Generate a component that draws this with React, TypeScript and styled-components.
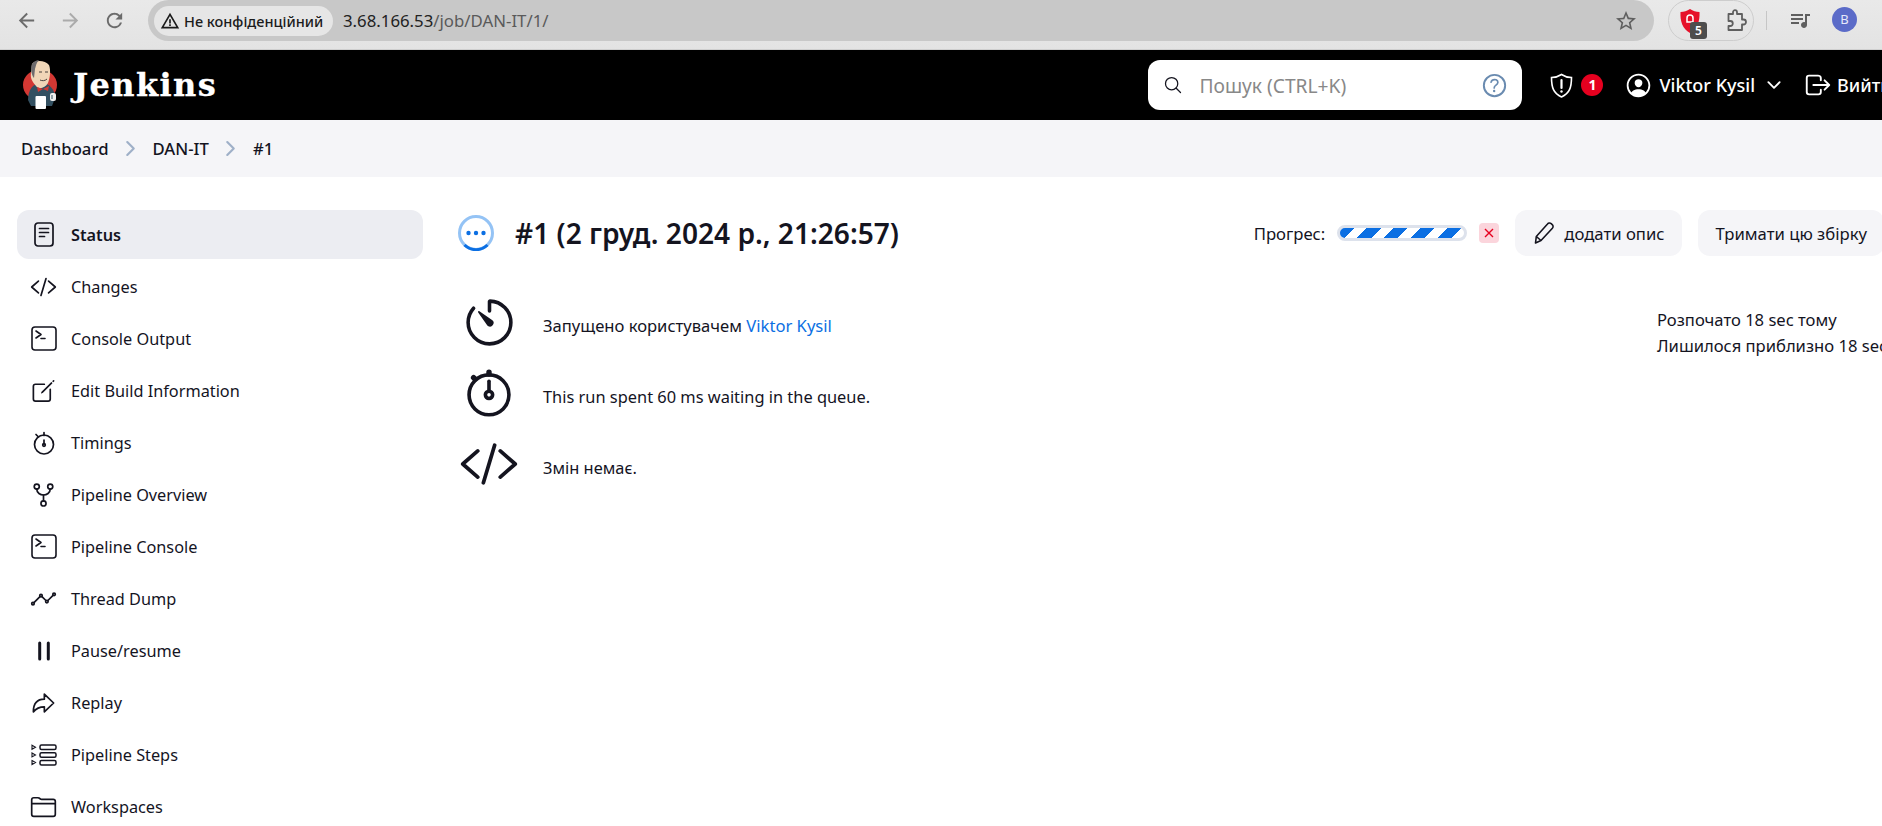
import React from "react";
import styled, { createGlobalStyle } from "styled-components";
import {
  IoAnalyticsOutline,
  IoArrowRedoOutline,
  IoChevronDownOutline,
  IoChevronForwardOutline,
  IoCodeSlashOutline,
  IoCreateOutline,
  IoFolderOutline,
  IoGitNetworkOutline,
  IoHelpCircleOutline,
  IoLogOutOutline,
  IoPersonCircleOutline,
  IoSearchOutline,
  IoStopwatchOutline,
  IoTimerOutline,
} from "react-icons/io5";
import { MdArrowBack, MdArrowForward, MdQueueMusic, MdRefresh, MdStarBorder, MdWarningAmber } from "react-icons/md";

const GlobalStyle = createGlobalStyle`
  html, body {
    margin: 0;
    height: 100%;
    overflow: hidden;
    background: #fff;
  }
  * { box-sizing: border-box; }
  body {
    font-family: "Noto Sans", "Open Sans", sans-serif;
    color: #14141f;
  }
`;

const Root = styled.div`
  width: 1900px;
  height: 826px;
  overflow: hidden;
`;

/* browser chrome */
const ChromeBar = styled.div`
  height: 50px;
  width: 1882px;
  display: flex;
  align-items: flex-start;
  background: linear-gradient(#e9e9e9, #e3e3e3);
  border-bottom: 1px solid #cfcfcf;
`;

const NavButtons = styled.div`
  width: 148px;
  height: 41px;
  flex: none;
  padding-left: 15px;
  display: flex;
  align-items: center;
  gap: 21px;
`;

const NavIcon = styled.span<{ $dim?: boolean }>`
  display: flex;
  color: ${(p) => (p.$dim ? "#ababab" : "#6b6b6b")};
  font-size: 23px;
`;

const Omnibox = styled.div`
  width: 1506px;
  height: 41px;
  flex: none;
  padding: 0 16px 0 6px;
  border-radius: 21px;
  background: #c8c8c8;
  display: flex;
  align-items: center;
`;

const SecurityChip = styled.div`
  width: 179px;
  height: 30px;
  flex: none;
  border-radius: 15px;
  background: #e6e6e6;
  padding-left: 6px;
  display: flex;
  align-items: center;
  gap: 4px;
  font-size: 14.500px;
  font-weight: 500;
  color: #1c1c1c;
  white-space: nowrap;
  svg { font-size: 20px; }
`;

const Url = styled.div`
  margin-left: 10px;
  font-size: 16.800px;
  color: #5a5a5a;
  flex: 1;
  b { font-weight: 400; color: #222; }
`;

const StarIcon = styled.span`
  display: flex;
  font-size: 24px;
  color: #5f5f5f;
`;

const ExtensionPill = styled.div`
  margin-left: 14px;
  width: 86px;
  height: 41px;
  flex: none;
  border: 1px solid #cdcdcd;
  border-radius: 21px;
  display: flex;
  align-items: center;
  padding-left: 11px;
  gap: 27px;
`;

const ShieldWrap = styled.div`
  position: relative;
  width: 20px;
  height: 24px;
  display: flex;
`;

const CountBadge = styled.span`
  position: absolute;
  left: 10px;
  top: 13px;
  width: 17px;
  height: 17px;
  border-radius: 3px;
  background: #4d4d4d;
  color: #fff;
  font-size: 12px;
  line-height: 17px;
  font-weight: 600;
  text-align: center;
`;

const ChromeDivider = styled.div`
  margin: 11px 0 0 12px;
  width: 1px;
  height: 19px;
  background: #c6c6c6;
`;

const MediaIcon = styled.span`
  margin: 8px 0 0 21px;
  display: flex;
  font-size: 24px;
  color: #5f5f5f;
`;

const Avatar = styled.div`
  margin: 7px 0 0 20px;
  width: 25px;
  height: 25px;
  border-radius: 50%;
  background: #5b6bc8;
  color: #e6e8fa;
  font-size: 13px;
  line-height: 25px;
  text-align: center;
`;

/* jenkins header */
const Header = styled.header`
  height: 70px;
  background: #000;
  color: #fff;
  display: flex;
  align-items: center;
  padding-left: 22px;
`;

const Brand = styled.div`
  display: flex;
  align-items: center;
  gap: 15px;
`;

const Wordmark = styled.span`
  font-family: "DejaVu Serif", "Liberation Serif", serif;
  font-weight: 700;
  font-size: 32px;
  letter-spacing: 1.400px;
  -webkit-text-stroke: 0.300px #fff;
  color: #fff;
`;

const HeaderRight = styled.div`
  margin-left: auto;
  display: flex;
  align-items: center;
`;

const SearchBox = styled.div`
  width: 374px;
  height: 50px;
  border-radius: 12px;
  background: #fff;
  color: #888;
  display: flex;
  align-items: center;
  padding: 0 12px 0 15px;
  font-size: 19.200px;
`;

const SearchIcon = styled.span`
  display: flex;
  font-size: 20px;
  color: #14141f;
  margin-right: 16px;
`;

const SearchHint = styled.span`
  flex: 1;
`;

const HelpIcon = styled.span`
  display: flex;
  font-size: 31px;
  color: #6a8bb0;
`;

const AlertIcon = styled.span`
  margin-left: 27px;
  display: flex;
`;

const AlertBadge = styled.span`
  margin-left: 7px;
  width: 22px;
  height: 22px;
  border-radius: 50%;
  background: #e6001f;
  color: #fff;
  font-size: 14px;
  font-weight: 700;
  line-height: 22px;
  text-align: center;
`;

const UserIcon = styled.span`
  margin-left: 21px;
  display: flex;
  font-size: 29px;
`;

const UserName = styled.span`
  margin-left: 6px;
  font-size: 18px;
  font-weight: 500;
  white-space: nowrap;
`;

const Chevron = styled.span`
  margin-left: 9px;
  display: flex;
  font-size: 20px;
`;

const LogoutIcon = styled.span`
  margin-left: 19px;
  display: flex;
  font-size: 30px;
`;

const LogoutText = styled.span`
  margin-left: 4px;
  width: 63px;
  font-size: 18px;
  font-weight: 500;
`;

/* breadcrumbs */
const Crumbs = styled.nav`
  height: 57px;
  background: #f5f5f8;
  padding-left: 21px;
  display: flex;
  align-items: center;
  font-size: 16.700px;
  font-weight: 500;
`;

const CrumbSep = styled.span`
  margin: 0 10.500px;
  display: flex;
  font-size: 23px;
  color: #9fb0c8;
`;

/* page */
const Page = styled.div`
  display: flex;
  padding: 33px 16px 0 17px;
`;

const Side = styled.aside`
  width: 406px;
  flex: none;
  display: flex;
  flex-direction: column;
  gap: 3px;
`;

const SideItem = styled.a<{ $active?: boolean }>`
  height: 49px;
  flex: none;
  display: flex;
  align-items: center;
  gap: 14px;
  padding-left: 13px;
  border-radius: 12px;
  font-size: 16.300px;
  font-weight: ${(p) => (p.$active ? 600 : 400)};
  background: ${(p) => (p.$active ? "#ecedf2" : "transparent")};
  color: #14141f;
`;

const SideIcon = styled.span`
  width: 27px;
  height: 27px;
  flex: none;
  display: flex;
  align-items: center;
  justify-content: center;
  font-size: 28px;
`;

const Content = styled.main`
  flex: 1;
  margin-left: 35px;
  min-width: 0;
`;

const TitleRow = styled.div`
  height: 46px;
  display: flex;
  align-items: center;
`;

const Title = styled.h1`
  margin: 0 0 0 21px;
  font-size: 28.100px;
  font-weight: 600;
  white-space: nowrap;
`;

const Actions = styled.div`
  margin-left: auto;
  display: flex;
  align-items: center;
  font-size: 16.700px;
`;

const ProgressLabel = styled.span`
  margin-right: 12px;
`;

const ProgressBar = styled.div`
  width: 130px;
  height: 16px;
  border: 3px solid #dde2ec;
  border-radius: 8px;
  background: repeating-linear-gradient(135deg, #0b6fe3 0 10px, #fff 10px 19px);
`;

const CancelButton = styled.span`
  margin-left: 12px;
  width: 20px;
  height: 20px;
  border-radius: 4px;
  background: #fbd5dc;
  color: #e6001f;
  display: flex;
  align-items: center;
  justify-content: center;
`;

const ActionButton = styled.button`
  height: 46px;
  border: none;
  border-radius: 12px;
  background: #f5f5f8;
  color: #14141f;
  font: inherit;
  padding: 0 17px 0 18px;
  display: flex;
  align-items: center;
  gap: 9px;
  white-space: nowrap;
  margin-left: 16px;
`;

const Body = styled.div`
  margin-top: 42px;
  display: flex;
  justify-content: space-between;
`;

const Facts = styled.div`
  display: flex;
  flex-direction: column;
  gap: 23px;
`;

const Fact = styled.div`
  height: 48px;
  display: flex;
  align-items: center;
  gap: 30px;
  margin-left: 7px;
`;

const FactIcon = styled.span<{ $size: number }>`
  width: 48px;
  height: 48px;
  flex: none;
  display: flex;
  align-items: center;
  justify-content: center;
  font-size: ${(p) => p.$size}px;
  svg { flex: none; }
`;

const FactText = styled.span<{ $size: number }>`
  margin-top: 7px;
  font-size: ${(p) => p.$size}px;
  a { color: #0b6fe3; text-decoration: none; }
`;

const Timing = styled.div`
  width: 227px;
  margin-top: 9px;
  font-size: 16.600px;
  line-height: 26px;
  white-space: nowrap;
`;

const JenkinsLogo = () => (
  <svg width="36" height="50" viewBox="0 0 36 50">
    <ellipse cx="18" cy="25" rx="17" ry="15.500" fill="#d33833" />
    <path d="M6 40c0-10 5-17 13-17s14 6 14 15l-3 8H9z" fill="#335061" />
    <path d="M10 4c3-4 13-4 17 1 2 5 1 13-1 18-3 5-9 7-12 3-3-4-6-7-5-13z" fill="#f0d6b7" />
    <path d="M10 4c2-3 5-4 7-4-3 3-3 6-4 9l-1 9c-2-2-4-9-2-14z" fill="#6d6b6d" />
    <path d="M17 12h3M23 12h3M18 20c2 1 5 1 7-1" stroke="#49423c" strokeWidth="1" fill="none" />
    <path d="M15 27l6 2 6-3-1 5-5-2-5 3z" fill="#d33833" />
    <rect x="13.500" y="36" width="10.500" height="13" rx="1" fill="#fff" />
    <rect x="28" y="33" width="6" height="8" rx="2" fill="#eee" />
    <path d="M30 35v4" stroke="#335061" strokeWidth="1" />
  </svg>
);

const ShieldAlert = () => (
  <svg width="25" height="25" viewBox="0 0 25 25" fill="none" stroke="#fff" strokeWidth="1.600">
    <path d="M12.500 1.500c3 2 6 3 10 3 0 10-2 16-10 19.500C4.500 20.500 2.500 14.500 2.500 4.500c4 0 7-1 10-3z" />
    <path d="M12.500 7v8" strokeWidth="2.200" strokeLinecap="round" />
    <circle cx="12.500" cy="18.500" r="1.200" fill="#fff" stroke="none" />
  </svg>
);

const BraveShield = () => (
  <svg width="20" height="24" viewBox="0 0 20 24">
    <path d="M10 0c3 2 6 3 9.500 3 .5 9-2 17-9.500 21C2.500 20 0 12 .5 3 4 3 7 2 10 0z" fill="#e6112a" />
    <path d="M10 6a3 3 0 0 1 3 3v4h-6V9a3 3 0 0 1 3-3z" fill="none" stroke="#fff" strokeWidth="1.500" />
  </svg>
);

const PuzzleIcon = () => (
  <svg width="20" height="24" viewBox="0 0 20 24" fill="none" stroke="#5f5f5f" strokeWidth="1.800" strokeLinejoin="round">
    <path d="M1.500 5h4.500V3.200a2 2 0 0 1 4 0V5h5v5.500h1.500a2.500 2.500 0 0 1 0 5H15V21H1.500v-4h1.800a2.500 2.500 0 0 0 0-5H1.500z" />
  </svg>
);

const StatusIcon = () => (
  <svg width="36" height="36" viewBox="0 0 36 36" fill="none" style={{ flex: "none" }}>
    <circle cx="18" cy="18" r="16.500" stroke="#94c3f5" strokeWidth="3" />
    <path d="M6.500 30a16.500 16.500 0 0 0 23 0" stroke="#0b6fe3" strokeWidth="3" />
    <circle cx="10.500" cy="18" r="2.200" fill="#0b6fe3" />
    <circle cx="18" cy="18" r="2.200" fill="#0b6fe3" />
    <circle cx="25.500" cy="18" r="2.200" fill="#0b6fe3" />
  </svg>
);

const DocIcon = () => (
  <svg width="20" height="25" viewBox="0 0 20 25" fill="none" stroke="#14141f" strokeWidth="1.700" strokeLinecap="round">
    <rect x="1" y="1" width="18" height="23" rx="3" />
    <path d="M5.500 6.500h9M5.500 10.500h9M5.500 14.500h5" />
  </svg>
);

const ConsoleIcon = () => (
  <svg width="26" height="25" viewBox="0 0 26 25" fill="none" stroke="#14141f" strokeWidth="1.600" strokeLinecap="round" strokeLinejoin="round">
    <rect x="1" y="1" width="24" height="23" rx="3" />
    <path d="M5 5l5 3.500L5 12M10 12.500h4" />
  </svg>
);

const TimingsIcon = () => (
  <svg width="22" height="24" viewBox="0 0 22 24" fill="none" stroke="#14141f" strokeWidth="1.700" strokeLinecap="round">
    <circle cx="11" cy="13.500" r="9.500" />
    <path d="M11 1.500v3M3 3.500l2 2M11 9v4" />
    <circle cx="11" cy="14" r="1.300" />
  </svg>
);

const PauseIcon = () => (
  <svg width="12" height="20" viewBox="0 0 12 20" fill="none" stroke="#14141f" strokeWidth="3" strokeLinecap="round">
    <path d="M1.700 2v16M10.300 2v16" />
  </svg>
);

const StepsIcon = () => (
  <svg width="26" height="22" viewBox="0 0 26 22" fill="none" stroke="#14141f" strokeWidth="1.500">
    <rect x="9" y="1" width="16" height="4.500" rx="1.500" />
    <rect x="9" y="8.700" width="16" height="4.500" rx="1.500" />
    <rect x="9" y="16.400" width="16" height="4.500" rx="1.500" />
    <path d="M1 1.200l3.500 2L1 5.200zM1 8.900l3.500 2L1 12.900zM1 16.600l3.500 2L1 20.600z" strokeWidth="1.100" />
  </svg>
);

const PencilIcon = () => (
  <svg width="22" height="24" viewBox="0 0 22 24" fill="none" stroke="#14141f" strokeWidth="1.600" strokeLinejoin="round">
    <path d="M2.500 22l.8-6.500L14.500 3a2.600 2.600 0 0 1 3.700-.3l1 .9a2.600 2.600 0 0 1 .2 3.700L8 19.500z" />
    <path d="M3.300 15.500L8 19.500" />
  </svg>
);

type NavEntry = { label: string; icon: React.ReactNode; active?: boolean };

const navEntries: NavEntry[] = [
  { label: "Status", icon: <DocIcon />, active: true },
  { label: "Changes", icon: <IoCodeSlashOutline /> },
  { label: "Console Output", icon: <ConsoleIcon /> },
  { label: "Edit Build Information", icon: <IoCreateOutline /> },
  { label: "Timings", icon: <TimingsIcon /> },
  { label: "Pipeline Overview", icon: <IoGitNetworkOutline /> },
  { label: "Pipeline Console", icon: <ConsoleIcon /> },
  { label: "Thread Dump", icon: <IoAnalyticsOutline /> },
  { label: "Pause/resume", icon: <PauseIcon /> },
  { label: "Replay", icon: <IoArrowRedoOutline /> },
  { label: "Pipeline Steps", icon: <StepsIcon /> },
  { label: "Workspaces", icon: <IoFolderOutline /> },
];

const App = () => (
  <Root>
    <GlobalStyle />
    <ChromeBar>
      <NavButtons>
        <NavIcon><MdArrowBack /></NavIcon>
        <NavIcon $dim><MdArrowForward /></NavIcon>
        <NavIcon><MdRefresh /></NavIcon>
      </NavButtons>
      <Omnibox>
        <SecurityChip><MdWarningAmber />Не конфіденційний</SecurityChip>
        <Url><b>3.68.166.53</b>/job/DAN-IT/1/</Url>
        <StarIcon><MdStarBorder /></StarIcon>
      </Omnibox>
      <ExtensionPill>
        <ShieldWrap><BraveShield /><CountBadge>5</CountBadge></ShieldWrap>
        <PuzzleIcon />
      </ExtensionPill>
      <ChromeDivider />
      <MediaIcon><MdQueueMusic /></MediaIcon>
      <Avatar>B</Avatar>
    </ChromeBar>

    <Header>
      <Brand>
        <JenkinsLogo />
        <Wordmark>Jenkins</Wordmark>
      </Brand>
      <HeaderRight>
        <SearchBox>
          <SearchIcon><IoSearchOutline /></SearchIcon>
          <SearchHint>Пошук (CTRL+K)</SearchHint>
          <HelpIcon><IoHelpCircleOutline /></HelpIcon>
        </SearchBox>
        <AlertIcon><ShieldAlert /></AlertIcon>
        <AlertBadge>1</AlertBadge>
        <UserIcon><IoPersonCircleOutline /></UserIcon>
        <UserName>Viktor Kysil</UserName>
        <Chevron><IoChevronDownOutline /></Chevron>
        <LogoutIcon><IoLogOutOutline /></LogoutIcon>
        <LogoutText>Вийти</LogoutText>
      </HeaderRight>
    </Header>

    <Crumbs>
      Dashboard
      <CrumbSep><IoChevronForwardOutline /></CrumbSep>
      DAN-IT
      <CrumbSep><IoChevronForwardOutline /></CrumbSep>
      #1
    </Crumbs>

    <Page>
      <Side>
        {navEntries.map((entry) => (
          <SideItem key={entry.label} $active={entry.active}>
            <SideIcon>{entry.icon}</SideIcon>
            {entry.label}
          </SideItem>
        ))}
      </Side>
      <Content>
        <TitleRow>
          <StatusIcon />
          <Title>#1 (2 груд. 2024 р., 21:26:57)</Title>
          <Actions>
            <ProgressLabel>Прогрес:</ProgressLabel>
            <ProgressBar />
            <CancelButton>
              <svg width="10" height="10" viewBox="0 0 10 10" stroke="currentColor" strokeWidth="1.400">
                <path d="M1 1l8 8M9 1l-8 8" />
              </svg>
            </CancelButton>
            <ActionButton><PencilIcon />додати опис</ActionButton>
            <ActionButton>Тримати цю збірку</ActionButton>
          </Actions>
        </TitleRow>
        <Body>
          <Facts>
            <Fact>
              <FactIcon $size={57}><IoTimerOutline /></FactIcon>
              <FactText $size={16.6}>Запущено користувачем <a href="#user">Viktor Kysil</a></FactText>
            </Fact>
            <Fact>
              <FactIcon $size={58}><IoStopwatchOutline /></FactIcon>
              <FactText $size={16.4}>This run spent 60 ms waiting in the queue.</FactText>
            </Fact>
            <Fact>
              <FactIcon $size={60}><IoCodeSlashOutline /></FactIcon>
              <FactText $size={16.4}>Змін немає.</FactText>
            </Fact>
          </Facts>
          <Timing>
            Розпочато 18 sec тому
            <br />
            Лишилося приблизно 18 sec тому
          </Timing>
        </Body>
      </Content>
    </Page>
  </Root>
);

export default App;
